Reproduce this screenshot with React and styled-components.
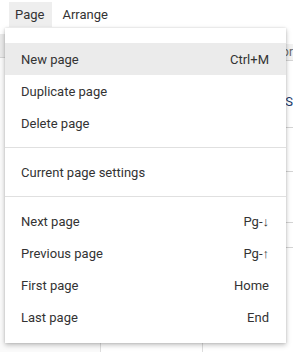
import React from "react";
import styled, { createGlobalStyle } from "styled-components";

const Global = createGlobalStyle`
  html, body { margin: 0; padding: 0; background: #fff; }
  body { font-family: Roboto, "Liberation Sans", Arial, sans-serif; overflow: hidden; }
`;

const Page = styled.div`
  position: relative;
  width: 293px;
  height: 352px;
  overflow: hidden;
  background: #fff;
`;

const MenuBar = styled.div`
  display: flex;
  align-items: flex-start;
  height: 28px;
  padding: 2px 0 0 9px;
  box-sizing: border-box;
  gap: 4px;
`;

const MenuBarItem = styled.div`
  height: 25px;
  line-height: 25px;
  padding: 0 8px 0 6px;
  font-size: 13px;
  color: #333;
  background: ${(p) => (p.$active ? "#eeeeee" : "transparent")};
`;

const Workspace = styled.div`
  display: flex;
  height: 324px;
`;

const LeftPanel = styled.div`
  width: 100px;
  display: flex;
  flex-direction: column;
  background: #fafafa;
  border-right: 1px solid #ddd;
`;

const RightPanel = styled.div`
  margin-left: auto;
  width: 90px;
  display: flex;
  flex-direction: column;
  background: #fff;
  border-left: 1px solid #ddd;
`;

const Band = styled.div`
  height: ${(p) => p.$h}px;
  flex: none;
  background: ${(p) => p.$bg || "transparent"};
  border-bottom: ${(p) => (p.$line ? "1px solid #d4d4d4" : "none")};
  box-sizing: border-box;
  font-size: ${(p) => p.$fs || 12}px;
  color: ${(p) => p.$color || "#666"};
  display: flex;
  align-items: center;
  justify-content: flex-end;
  padding-right: ${(p) => p.$pr ?? 2}px;
  white-space: nowrap;
`;

const Menu = styled.div`
  position: absolute;
  left: 5px;
  top: 28px;
  width: 281px;
  background: #fff;
  padding: 15px 0 10px;
  box-sizing: border-box;
  box-shadow: 0 2px 5px rgba(0, 0, 0, 0.25), 0 0 2px rgba(0, 0, 0, 0.12);
`;

const Item = styled.div`
  display: flex;
  justify-content: space-between;
  align-items: center;
  height: 32px;
  padding: 0 17px 0 16px;
  font-size: 13px;
  color: #333;
  background: ${(p) => (p.$hover ? "#ebebeb" : "transparent")};
`;

const Shortcut = styled.span`
  color: #333;
`;

const Separator = styled.div`
  height: 1px;
  background: #e0e0e0;
  margin: 8px 0 8px;
`;

export default function App() {
  return (
    <>
      <Global />
      <Page>
        <MenuBar>
          <MenuBarItem $active>Page</MenuBarItem>
          <MenuBarItem>Arrange</MenuBarItem>
        </MenuBar>
        <Workspace>
          <LeftPanel>
            <Band $h={6} $bg="#fff" />
            <Band $h={24} $bg="#eaeaea" $line />
            <Band $h={110} />
            <Band $h={184} />
          </LeftPanel>
          <RightPanel>
            <Band $h={16} $bg="#fff" />
            <Band $h={17} $bg="#f1f1f1" $line $pr={0}>Color</Band>
            <Band $h={31} />
            <Band $h={18} $fs={13} $color="#1a3a6b" $pr={0}>Style S</Band>
            <Band $h={18} $line />
            <Band $h={44} $line />
            <Band $h={51} $line />
            <Band $h={25} $line />
            <Band $h={104} />
          </RightPanel>
        </Workspace>
        <Menu>
          <Item $hover>
            <span>New page</span>
            <Shortcut>Ctrl+M</Shortcut>
          </Item>
          <Item>
            <span>Duplicate page</span>
          </Item>
          <Item>
            <span>Delete page</span>
          </Item>
          <Separator />
          <Item>
            <span>Current page settings</span>
          </Item>
          <Separator />
          <Item>
            <span>Next page</span>
            <Shortcut>Pg-↓</Shortcut>
          </Item>
          <Item>
            <span>Previous page</span>
            <Shortcut>Pg-↑</Shortcut>
          </Item>
          <Item>
            <span>First page</span>
            <Shortcut>Home</Shortcut>
          </Item>
          <Item>
            <span>Last page</span>
            <Shortcut>End</Shortcut>
          </Item>
        </Menu>
      </Page>
    </>
  );
}
